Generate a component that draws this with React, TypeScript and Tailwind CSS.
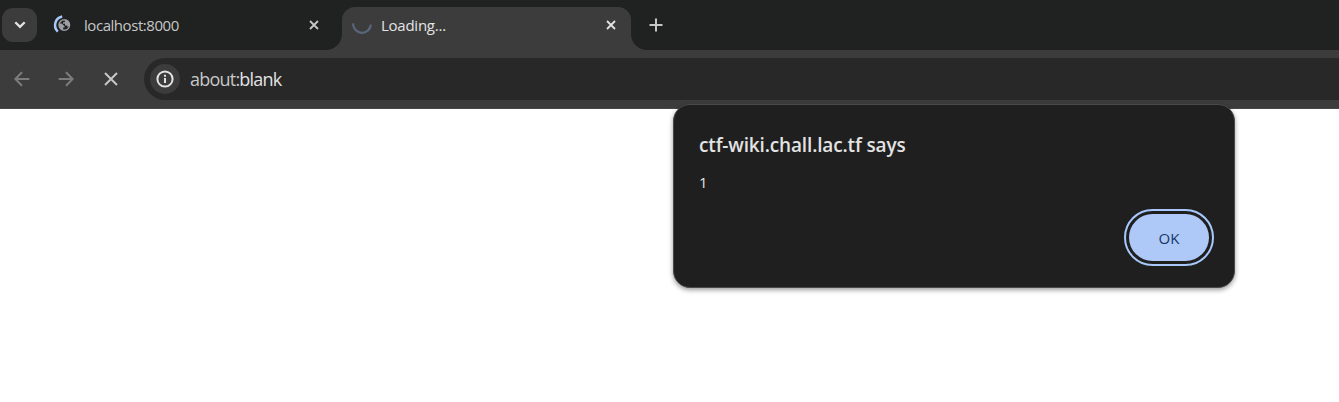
import React from "react";

function Cross({ size, width, className }: { size: number; width: number; className?: string }) {
  return (
    <svg width={size} height={size} viewBox={`0 0 ${size} ${size}`} className={`shrink-0 ${className ?? ""}`} fill="none" stroke="currentColor" strokeWidth={width}>
      <path d={`M1 1L${size - 1} ${size - 1}M${size - 1} 1L1 ${size - 1}`} />
    </svg>
  );
}

function GlobeLoading() {
  return (
    <svg width="20" height="20" viewBox="0 0 20 20" className="shrink-0" fill="none">
      <path d="M10.2 1.6A8.8 8.8 0 0 0 5.8 16.6" stroke="#a8c7fa" strokeWidth="2.5" />
      <circle cx="12.3" cy="10" r="5.3" stroke="#9b9ea2" strokeWidth="1.4" />
      <path d="M7 8.6H9.8L12.6 11.2V12.4H11.2V15.4C8.4 15 6.6 12.4 7 8.6ZM12.8 4.8C16 5 17.6 7.4 17.8 10L15.8 12.2L15 10.6H13V8.8H11V7.2H12.8Z" fill="#9b9ea2" />
    </svg>
  );
}

function TabStrip() {
  return (
    <div className="flex h-[50px] bg-[#1f2221]">
      <button className="ml-[2px] mt-2 flex h-[34px] w-[35px] items-center justify-center rounded-[11px] bg-[#3c3c3c] text-[#e3e3e3]">
        <svg width="12" height="8" viewBox="0 0 12 8" fill="none" stroke="currentColor" strokeWidth="2.3">
          <path d="M1.3 1.2L6 5.9L10.7 1.2" />
        </svg>
      </button>
      <div className="flex w-[305px] items-center pl-[15px] text-[#c7c7c7]">
        <GlobeLoading />
        <span className="ml-[12px] mt-px w-[225px] text-[15px] tracking-[-0.45px]">localhost:8000</span>
        <Cross size={10} width={1.8} />
      </div>
      <div className="relative mt-[7px] flex h-[43px] w-[289px] items-start rounded-t-[13px] bg-[#3c3c3c] text-[#e3e3e3]">
        <svg width="16" height="16" viewBox="0 0 16 16" className="absolute -left-4 bottom-0">
          <path d="M16 0V16H0A16 16 0 0 0 16 0Z" fill="#3c3c3c" />
        </svg>
        <svg width="16" height="16" viewBox="0 0 16 16" className="absolute -right-4 bottom-0">
          <path d="M0 0V16H16A16 16 0 0 1 0 0Z" fill="#3c3c3c" />
        </svg>
        <svg width="20" height="12" viewBox="0 0 20 12" className="ml-[10px] mt-4 shrink-0" fill="none">
          <path d="M1.2 .4A8.8 8.8 0 0 0 18.8 1.6" stroke="#596579" strokeWidth="2.3" />
        </svg>
        <span className="ml-[9px] mt-[7px] w-[225px] text-[15px] leading-[22px] tracking-[-0.25px]">Loading...</span>
        <Cross size={10} width={1.8} className="mt-[13px]" />
      </div>
      <svg width="14" height="14" viewBox="0 0 14 14" className="ml-[18px] mt-[18px] text-[#c7c7c7]" fill="none" stroke="currentColor" strokeWidth="2">
        <path d="M7 .5V13.5M.5 7H13.5" />
      </svg>
    </div>
  );
}

function Toolbar() {
  return (
    <div className="flex h-[59px] items-start border-b border-[#484848] bg-[#3c3c3c] pt-2">
      <div className="flex h-[42px] w-[144px] items-center pl-[14px]">
        <svg width="16" height="16" viewBox="0 0 16 16" fill="none" stroke="#7c7c7c" strokeWidth="2">
          <path d="M15.3 8H1.8M8 1.3L1.4 8L8 14.7" />
        </svg>
        <svg width="16" height="16" viewBox="0 0 16 16" className="ml-[28px]" fill="none" stroke="#7c7c7c" strokeWidth="2">
          <path d="M.7 8H14.2M8 1.3L14.6 8L8 14.7" />
        </svg>
        <Cross size={14} width={2} className="ml-[30px] text-[#c7c7c7]" />
      </div>
      <div className="flex h-[42px] flex-1 items-center rounded-l-full bg-[#282828] pl-[6px]">
        <span className="flex size-[30px] items-center justify-center rounded-full bg-[#3c3c3c]">
          <svg width="18" height="18" viewBox="0 0 18 18" fill="none" stroke="#e3e3e3" strokeWidth="2">
            <circle cx="9" cy="9" r="7.6" />
            <path d="M9 8V13M9 4.8V6.7" />
          </svg>
        </span>
        <span className="ml-[10px] mt-px text-[18px] tracking-[-0.78px] text-[#c7c7c7]">
          about:<span className="text-[#e3e3e3]">blank</span>
        </span>
      </div>
    </div>
  );
}

function AlertDialog() {
  return (
    <div role="dialog" className="absolute left-[673px] top-[104px] flex h-[184px] w-[562px] flex-col rounded-[17px] border-[1.5px] border-[#4a4a4a] bg-[#1f1f1f] pl-[25px] pr-[20px] pt-[27px] shadow-[0_2px_5px_rgba(0,0,0,0.4)]">
      <h1 className="text-[19px] font-semibold leading-[26px] tracking-[-0.15px] text-[#e3e3e3]">ctf-wiki.chall.lac.tf says</h1>
      <p className="mt-[13px] text-[15px] leading-[22px] text-[#e3e3e3]">1</p>
      <button className="mt-[16px] flex h-[57px] w-[90px] items-center justify-center self-end rounded-full border-[2px] border-[#a8c7fa] p-[3px]">
        <span className="flex h-full w-full items-center justify-center rounded-full bg-[#aec9f8] pt-[2px] text-[15px] font-medium text-[#173766]">OK</span>
      </button>
    </div>
  );
}

export default function App() {
  return (
    <div className="relative h-[402px] w-full overflow-hidden bg-white font-['Open_Sans',sans-serif]">
      <TabStrip />
      <Toolbar />
      <AlertDialog />
    </div>
  );
}
